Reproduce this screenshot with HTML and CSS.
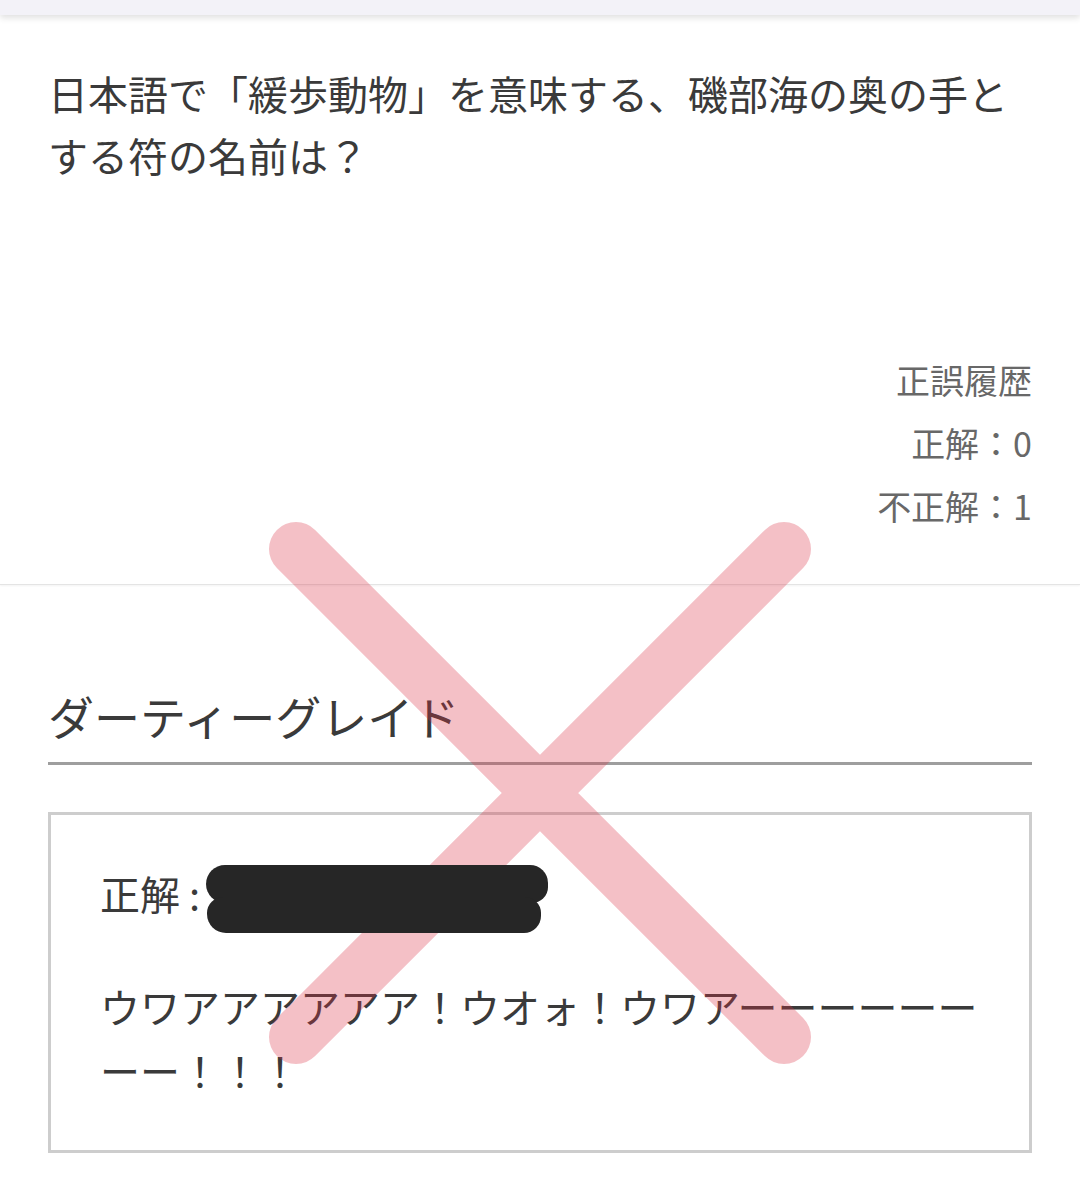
FILE: index.html
```html
<!DOCTYPE html>
<html lang="ja">
<head>
  <meta charset="UTF-8" />
  <meta name="viewport" content="width=device-width, initial-scale=1.0"/>
  <title>クイズ結果</title>
  <link rel="stylesheet" href="styles.css">
</head>
<body>
  <div class="page">
    <div class="topbar"></div>

    <section class="question">
      <p class="question-text">日本語で「緩歩動物」を意味する、磯部海の奥の手とする符の名前は？</p>
      <div class="history">
        <div>正誤履歴</div>
        <div>正解：0</div>
        <div>不正解：1</div>
      </div>
    </section>

    <section class="answer">
      <h2 class="answer-title">ダーティーグレイド</h2>
      <div class="answer-box">
        <p class="correct">正解 :<span class="redact"><span class="redact-top"></span><span class="redact-bottom"></span></span></p>
        <p class="comment">ウワアアアアアア！ウオォ！ウワアーーーーーーーー！！！</p>
      </div>
    </section>

    <!-- wrong answer mark -->
    <svg class="wrong-mark" width="1080" height="1192" viewBox="0 0 1080 1192">
      <path d="M296 549 L784 1037 M784 549 L296 1037" />
    </svg>
  </div>
</body>
</html>
```

FILE: styles.css
```css
:root {
  --text: #3a3a3a;
  --muted: #686868;
  --bar: #f3f2f8;
  --box-border: #cdcdcd;
}

body {
  margin: 0;
  background: #fff;
  font-family: "Noto Sans CJK JP", "Noto Sans", sans-serif;
  color: var(--text);
}

.page {
  position: relative;
  width: 1080px;
  min-height: 1192px;
  overflow: hidden;
}

.topbar {
  position: relative;
  z-index: 1;
  height: 15px;
  background: var(--bar);
  box-shadow: 0 3px 6px rgba(0, 0, 0, 0.12);
}

.question {
  padding: 47px 48px 47px;
  border-bottom: 1px solid #e4e4e4;
  box-shadow: 0 1px 2px rgba(0, 0, 0, 0.05);
}

.question-text {
  margin: 0 0 162px;
  font-size: 40px;
  line-height: 62px;
}

.history {
  text-align: right;
  font-size: 34px;
  line-height: 63px;
  color: var(--muted);
}

.answer {
  padding: 96px 48px 0;
}

.answer-title {
  margin: 0;
  padding-bottom: 13px;
  font-size: 46px;
  font-weight: normal;
  line-height: 68px;
  border-bottom: 3px solid #9e9e9e;
}

.answer-box {
  margin-top: 47px;
  padding: 46px 30px 48px 49px;
  border: 3px solid var(--box-border);
  font-size: 40px;
  line-height: 64px;
}

.correct {
  margin: 0;
}

.comment {
  margin: 45px 0 0;
}

/* blacked-out answer sits above the mark */
.redact {
  position: relative;
  z-index: 2;
  display: inline-block;
  width: 342px;
  margin: -4px 0 -4px 6px;
  vertical-align: middle;
}

.redact-top,
.redact-bottom {
  display: block;
  background: #262626;
}

.redact-top {
  height: 38px;
  border-radius: 19px 18px 16px 19px;
}

.redact-bottom {
  width: 334px;
  height: 36px;
  margin-top: -6px;
  margin-left: 1px;
  border-radius: 16px 16px 17px 19px;
}

.wrong-mark {
  position: absolute;
  z-index: 1;
  left: 0;
  top: 0;
  opacity: 0.3;
  pointer-events: none;
}

.wrong-mark path {
  fill: none;
  stroke: #dc3246;
  stroke-width: 54;
  stroke-linecap: round;
}
```
